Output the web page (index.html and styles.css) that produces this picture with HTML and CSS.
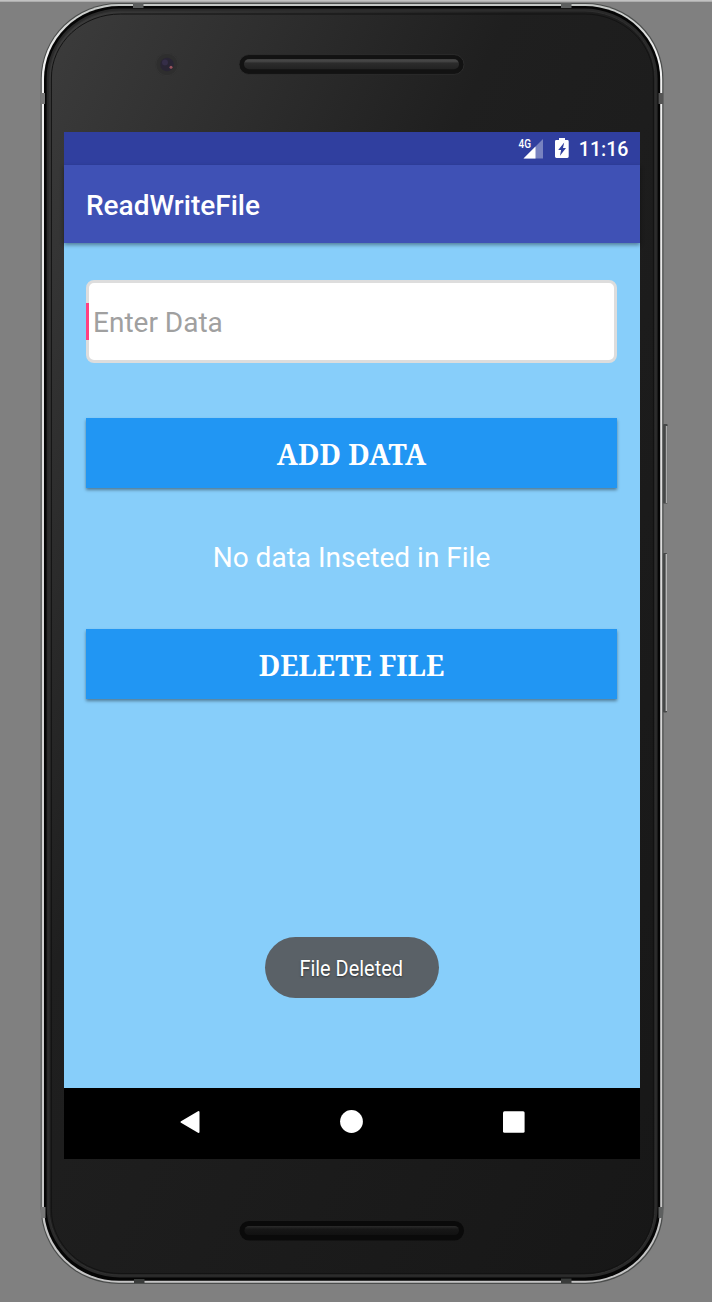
FILE: index.html
```
<!DOCTYPE html>
<html lang="en">
<head>
<meta charset="utf-8">
<title>ReadWriteFile</title>
<link rel="stylesheet" href="styles.css">
</head>
<body>
<div class="stage">
  <svg class="device" width="712" height="1302" viewBox="0 0 712 1302" aria-hidden="true">
    <defs>
      <linearGradient id="face" x1="0" y1="0" x2="1" y2="1">
        <stop offset="0" stop-color="#3c3c3c"/><stop offset=".2" stop-color="#2d2d2d"/>
        <stop offset=".38" stop-color="#1f1f1f"/><stop offset="1" stop-color="#171717"/>
      </linearGradient>
      <linearGradient id="metal" x1="0" y1="0" x2="0" y2="1">
        <stop offset="0" stop-color="#c4c7c5"/><stop offset=".04" stop-color="#f2f2f2"/>
        <stop offset=".5" stop-color="#d8d8d8"/><stop offset="1" stop-color="#c4c4c4"/>
      </linearGradient>
      <linearGradient id="slot" x1="0" y1="0" x2="0" y2="1">
        <stop offset="0" stop-color="#3e3e3e"/><stop offset=".2" stop-color="#484848"/><stop offset=".4" stop-color="#2c2c2c"/><stop offset="1" stop-color="#222"/>
      </linearGradient>
      <linearGradient id="slotDark" x1="0" y1="0" x2="0" y2="1">
        <stop offset="0" stop-color="#2b2b2b"/><stop offset=".35" stop-color="#171717"/><stop offset="1" stop-color="#111"/>
      </linearGradient>
    </defs>
    <rect width="712" height="1.7" fill="#c2c2c2"/>
    <g>
      <rect x="663" y="424" width="4.6" height="79.5" rx="1" fill="#454747"/>
      <rect x="665.8" y="426" width="1.6" height="77" fill="#aaa"/>
      <rect x="663" y="553" width="4" height="159.5" rx="1" fill="#454747"/>
      <rect x="665.6" y="554" width="1.4" height="157" fill="#b8b8b8"/>
    </g>
    <rect x="40.7" y="3" width="622.8" height="1281" rx="78" ry="76" fill="#4b4d4c"/>
    <rect x="41.8" y="4" width="620.4" height="1278.8" rx="77" ry="75" fill="url(#metal)"/>
    <rect x="44" y="6" width="616.2" height="1274.8" rx="75" ry="73" fill="#050505"/>
    <rect x="46.6" y="8.6" width="611" height="1268.8" rx="73" ry="70" fill="#292929"/>
    <rect x="49" y="11" width="606" height="1264" rx="71" ry="67" fill="url(#face)" stroke="#303030"/>
    <rect x="51.4" y="14" width="602" height="1259.5" rx="69" ry="64" fill="url(#face)" stroke="#131313"/>
    <g fill="#5d5f5f">
      <rect x="133" y="3" width="10.5" height="5"/><rect x="561" y="3" width="10.5" height="5"/>
      <rect x="134" y="1279" width="10.5" height="4" fill="#393b3a"/><rect x="561" y="1278.5" width="10.5" height="4.5" fill="#393b3a"/>
      <rect x="40.5" y="93" width="4.5" height="11" fill="#777"/><rect x="658.5" y="93" width="4.5" height="11" fill="#555"/>
      <rect x="41" y="1207" width="4.5" height="11" fill="#777"/><rect x="658.5" y="1207" width="4.5" height="11"/>
    </g>
    <circle cx="167" cy="64.5" r="11.5" fill="#2e2e2e"/>
    <circle cx="167" cy="64.5" r="11.2" fill="none" stroke="#353535"/>
    <circle cx="167" cy="64.5" r="6.8" fill="#292534"/>
    <circle cx="165" cy="62.5" r="3" fill="#352e48"/>
    <circle cx="171" cy="67.3" r="1.5" fill="#99535c"/>
    <rect x="239" y="54.6" width="225" height="19.8" rx="9.9" fill="#121212" stroke="#303030" stroke-width=".8"/>
    <rect x="244" y="59" width="215" height="10.3" rx="5.1" fill="url(#slot)"/>
    <rect x="239.5" y="1221" width="224.5" height="19.5" rx="9.7" fill="#0a0a0a"/>
    <rect x="244.5" y="1226" width="214.5" height="9" rx="4.5" fill="url(#slotDark)"/>
  </svg>

  <main class="screen">
    <div class="status">
      <svg class="signal" width="26" height="22" viewBox="0 0 26 22">
        <text x="0.5" y="9.5" textLength="12.5" lengthAdjust="spacingAndGlyphs">4G</text>
        <path d="M5.5 20.500 25 1v19.500z" fill="#fff" fill-opacity=".35"/>
        <path d="M5.5 20.500 17.500 8.500v12z" fill="#fff"/>
      </svg>
      <svg class="battery" width="14" height="21" viewBox="0 0 14 21">
        <path fill="#fff" fill-rule="evenodd" d="M4 0h6v2h2.300q1.400 0 1.400 1.400v15.200q0 1.400-1.400 1.400H1.400Q0 20 0 18.600V3.400Q0 2 1.400 2H4zM9.200 4.500 3.200 12h2.900L5 17.800 11 10H8z"/>
      </svg>
      <span class="clock">11:16</span>
    </div>
    <header class="toolbar">ReadWriteFile</header>
    <section class="content">
      <div class="field"><span class="caret"></span><span class="hint">Enter Data</span></div>
      <button class="action">ADD DATA</button>
      <p class="message">No data Inseted in File</p>
      <button class="action delete">DELETE FILE</button>
      <div class="toast"><span class="toast-text">File Deleted</span></div>
    </section>
    <nav class="nav">
      <svg width="24" height="26" viewBox="0 0 24 26"><path d="M4.500 13 21.500 3v20z" fill="#fff" stroke="#fff" stroke-width="2" stroke-linejoin="round"/></svg>
      <svg width="24" height="26" viewBox="0 0 24 26"><circle cx="11.500" cy="12.500" r="11.400" fill="#fff"/></svg>
      <svg width="24" height="26" viewBox="0 0 24 26"><rect x="1" y="2.200" width="21.600" height="21.600" rx="1.500" fill="#fff"/></svg>
    </nav>
  </main>
</div>
</body>
</html>
```
FILE: styles.css
```
* { box-sizing: border-box; }
body { margin: 0; background: #808080; font-family: Roboto, "Liberation Sans", sans-serif; }
.stage { position: relative; width: 712px; height: 1302px; padding: 132px 72px 143px 64px; overflow: hidden; }
.device { position: absolute; inset: 0; }
.screen { position: relative; width: 576px; height: 1027px; display: flex; flex-direction: column; background: #87cefa; }
.status { height: 33px; flex: none; display: flex; align-items: center; justify-content: flex-end; padding-right: 11.5px; background: #303f9f; color: #fff; }
.signal { margin-right: 10.6px; }
.signal text { font: 500 12px Roboto, sans-serif; fill: #fff; }
.battery { margin-right: 10px; }
.clock { font-size: 19.6px; font-weight: 500; line-height: 33px; padding-top: 1px; }
.toolbar { height: 78px; flex: none; padding: 2px 22px 0; background: #3f51b5; color: #fff; font-size: 28px; font-weight: 500; line-height: 78px; box-shadow: 0 2px 4px rgba(0,0,0,.4); }
.content { flex: 1; display: flex; flex-direction: column; padding: 36.5px 23px 0 22px; }
.field { height: 83.5px; flex: none; display: flex; align-items: center; background: #fff; border: 3px solid #ddd; border-radius: 8px; }
.caret { width: 3px; height: 37px; margin-left: -3px; background: #ff4081; }
.hint { margin-left: 4px; padding-top: 2.6px; font-size: 28px; color: #a0a0a0; }
.action { height: 70px; flex: none; margin: 55.4px 0 0; padding: 2px 0 0; border: 0; background: #2196f3; color: #fff; font: bold 28px "Noto Serif", "DejaVu Serif Condensed", "DejaVu Serif", serif; box-shadow: 0 2px 3px rgba(0,0,0,.4); }
.message { margin: 51px 0 0; height: 38px; line-height: 38px; text-align: center; color: #fff; font-size: 28px; }
.action.delete { margin-top: 52px; }
.toast { align-self: center; width: 174px; height: 61px; margin-top: 237.6px; border-radius: 31px; background: #5a6167; display: flex; align-items: center; justify-content: center; color: #fff; font-size: 22.4px; padding-top: 2px; }
.toast-text { transform: scaleX(.89); white-space: nowrap; text-shadow: 0 1px 2px rgba(0,0,0,.5); }
.nav { height: 71px; flex: none; display: flex; align-items: center; justify-content: center; gap: 138.5px; padding: 0 1px 4px 0; background: #000; }
```
